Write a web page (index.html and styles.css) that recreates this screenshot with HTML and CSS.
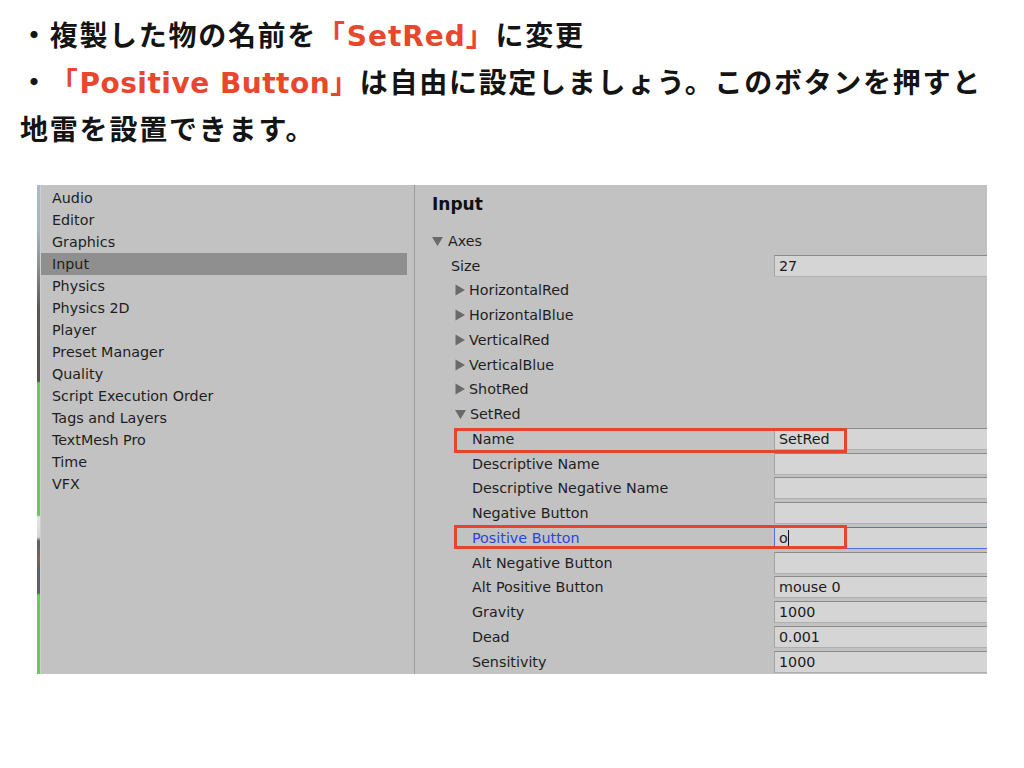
FILE: index.html
```html
<!DOCTYPE html>
<html lang="ja">
<head>
<meta charset="utf-8">
<title>Input settings</title>
<link rel="stylesheet" href="styles.css">
</head>
<body>
<div class="notes">
  <p class="line line-1">・複製した物の名前を<span class="red">「<span class="latin">SetRed</span>」</span>に変更</p>
  <p class="line line-2">・<span class="red">「<span class="latin">Positive Button</span>」</span>は自由に設定しましょう。このボタンを押すと<br><span class="cont">地雷を設置できます。</span></p>
</div>

<div class="shot">
  <div class="strip"></div>
  <div class="edge"></div>
  <div class="sidebar">
    <div class="item">Audio</div>
    <div class="item">Editor</div>
    <div class="item">Graphics</div>
    <div class="item selected">Input</div>
    <div class="item">Physics</div>
    <div class="item">Physics 2D</div>
    <div class="item">Player</div>
    <div class="item">Preset Manager</div>
    <div class="item">Quality</div>
    <div class="item">Script Execution Order</div>
    <div class="item">Tags and Layers</div>
    <div class="item">TextMesh Pro</div>
    <div class="item">Time</div>
    <div class="item">VFX</div>
  </div>
  <div class="divider"></div>
  <div class="inspector">
    <div class="title">Input</div>
    <div class="row lvl0"><span class="label"><svg class="tri" width="11" height="10" viewBox="0 0 11 10"><path d="M0 1 H11 L5.5 10 Z"/></svg>Axes</span></div>
    <div class="row lvl1"><span class="label">Size</span><span class="field">27</span></div>
    <div class="row lvl1 fold"><span class="label"><svg class="tri" width="10" height="12" viewBox="0 0 10 12"><path d="M0.5 0.5 L10 6 L0.5 11.5 Z"/></svg>HorizontalRed</span></div>
    <div class="row lvl1 fold"><span class="label"><svg class="tri" width="10" height="12" viewBox="0 0 10 12"><path d="M0.5 0.5 L10 6 L0.5 11.5 Z"/></svg>HorizontalBlue</span></div>
    <div class="row lvl1 fold"><span class="label"><svg class="tri" width="10" height="12" viewBox="0 0 10 12"><path d="M0.5 0.5 L10 6 L0.5 11.5 Z"/></svg>VerticalRed</span></div>
    <div class="row lvl1 fold"><span class="label"><svg class="tri" width="10" height="12" viewBox="0 0 10 12"><path d="M0.5 0.5 L10 6 L0.5 11.5 Z"/></svg>VerticalBlue</span></div>
    <div class="row lvl1 fold"><span class="label"><svg class="tri" width="10" height="12" viewBox="0 0 10 12"><path d="M0.5 0.5 L10 6 L0.5 11.5 Z"/></svg>ShotRed</span></div>
    <div class="row lvl1 fold"><span class="label"><svg class="tri" width="11" height="10" viewBox="0 0 11 10"><path d="M0 1 H11 L5.5 10 Z"/></svg>SetRed</span></div>
    <div class="row lvl2"><span class="label">Name</span><span class="field">SetRed</span><span class="mark mark-name"></span></div>
    <div class="row lvl2"><span class="label">Descriptive Name</span><span class="field"></span></div>
    <div class="row lvl2"><span class="label">Descriptive Negative Name</span><span class="field"></span></div>
    <div class="row lvl2"><span class="label">Negative Button</span><span class="field"></span></div>
    <div class="row lvl2"><span class="label focus">Positive Button</span><span class="field focused"><span class="caret">o</span></span><span class="mark mark-pos"></span></div>
    <div class="row lvl2"><span class="label">Alt Negative Button</span><span class="field"></span></div>
    <div class="row lvl2"><span class="label">Alt Positive Button</span><span class="field">mouse 0</span></div>
    <div class="row lvl2"><span class="label">Gravity</span><span class="field">1000</span></div>
    <div class="row lvl2"><span class="label">Dead</span><span class="field">0.001</span></div>
    <div class="row lvl2"><span class="label">Sensitivity</span><span class="field">1000</span></div>
  </div>
</div>
</body>
</html>
```

FILE: styles.css
```css
html, body {
  margin: 0;
  padding: 0;
  background: #ffffff;
}

.notes {
  padding: 12px 0 0 20px;
  height: 185px;
  box-sizing: border-box;
  font-family: "Noto Sans CJK JP", "Noto Sans", sans-serif;
  font-weight: 700;
  font-size: 28px;
  line-height: 45px;
  color: #141414;
}

.line {
  margin: 0;
  white-space: nowrap;
  text-spacing-trim: space-all;
}

.line-1 {
  letter-spacing: 1.7px;
}

.line-2 {
  letter-spacing: 1.7px;
}

.cont {
  letter-spacing: 1.8px;
}

.red {
  color: #e8472d;
}

.latin {
  font-family: "DejaVu Sans", "Noto Sans", sans-serif;
  font-weight: 700;
  font-size: 28px;
  letter-spacing: 1px;
}

.line-2 .latin {
  letter-spacing: 0.5px;
}

.shot {
  margin-left: 37px;
  width: 950px;
  height: 489px;
  display: flex;
  background: #c2c2c2;
  overflow: hidden;
  font-family: "DejaVu Sans", "Liberation Sans", sans-serif;
  font-size: 14.3px;
  color: #1e1e1e;
}

.strip {
  flex: 0 0 3px;
  background: linear-gradient(to bottom,
    #a9bcc6 0px, #a4b6be 45px, #8d9195 80px, #5b5653 125px,
    #57524f 196px, #66cc55 198px, #66cc55 330px,
    #e6e6e6 332px, #d5d5d5 352px, #5d5f6a 356px, #7a6650 375px,
    #5d5f6a 385px, #5f606a 408px, #66cc55 410px, #66cc55 489px);
}

.edge {
  flex: 0 0 1px;
  background: #cfcfcf;
}

.sidebar {
  flex: 0 0 366px;
  padding: 2px 7px 0 0;
}

.item {
  height: 22px;
  line-height: 22px;
  padding-left: 11px;
}

.item.selected {
  background: #8f8f8f;
}

.divider {
  flex: 0 0 1px;
  background: #9c9c9c;
}

.inspector {
  flex: 1;
  position: relative;
  min-width: 0;
}

.title {
  height: 43.6px;
  line-height: 38px;
  padding-left: 17px;
  font-weight: 700;
  font-size: 17px;
  color: #111;
}

.row {
  position: relative;
  display: flex;
  align-items: center;
  height: 24.75px;
}

.label {
  flex: 1;
  display: flex;
  align-items: center;
  white-space: nowrap;
}

.lvl0 .label { padding-left: 17px; }
.lvl1 .label { padding-left: 36px; }
.lvl1.fold .label { padding-left: 40px; }
.lvl2 .label { padding-left: 57px; }

.tri {
  fill: #6a6a6a;
  margin-right: 5px;
  flex: none;
}

.fold .tri {
  margin-right: 4px;
}

.label.focus {
  color: #2a45dc;
}

.field {
  flex: 0 0 220px;
  margin-right: -7px;
  height: 22px;
  box-sizing: border-box;
  background: #d5d5d5;
  border: 1px solid #a3a3a3;
  border-top-color: #8a8a8a;
  border-bottom-color: #b0b0b0;
  padding-left: 4px;
  line-height: 20px;
  color: #1a1a1a;
}

.field.focused {
  border: 1px solid #4f6fe8;
}

.caret {
  border-right: 1px solid #111;
}

.mark {
  position: absolute;
  left: 39px;
  width: 393px;
  box-sizing: border-box;
  border: 3px solid #e5452c;
}

.mark-name {
  top: 1.5px;
  height: 25px;
}

.mark-pos {
  top: -1px;
  height: 24px;
}
```
